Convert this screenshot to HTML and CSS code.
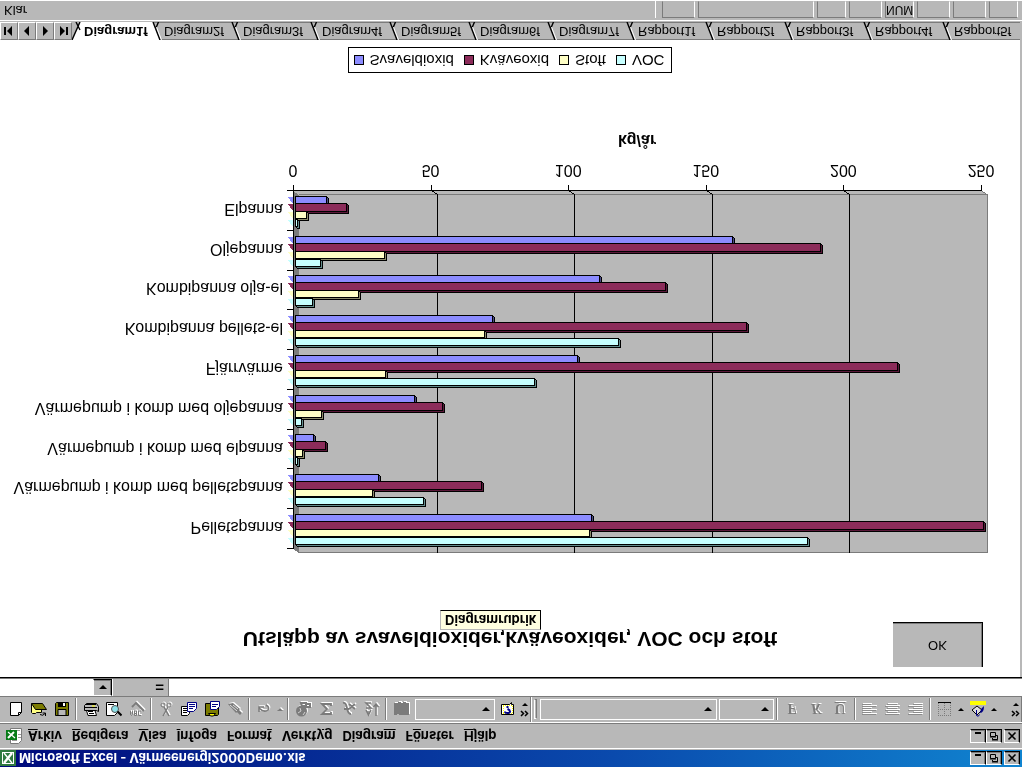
FILE: index.html
```html
<!DOCTYPE html>
<html lang="sv">
<head>
<meta charset="utf-8">
<title>Microsoft Excel - Värmeenergi2000Demo.xls</title>
<link rel="stylesheet" href="styles.css">
</head>
<body>
<svg class="symbols" aria-hidden="true">
  <symbol id="excel" viewBox="0 0 16 16"><path fill="#2f7a3f" d="M0 0h16v16H0z"/><path fill="#fff" d="M2 2h12v12H2z"/><path fill="#2f7a3f" d="M3 3h10v10H3z"/><path stroke="#fff" stroke-width="2.4" d="M4 3l8 10"/><path stroke="#fff" stroke-width="1.4" d="M12 3L4 13"/></symbol>
  <symbol id="book" viewBox="0 0 16 16"><path fill="#fff" stroke="#7b7b7b" d="M4.500 .5h8l3 3v12h-11z"/><path fill="none" stroke="#999" d="M6 3.500h5M12 6.500h3M12 9.500h3M6 13.500h8"/><path fill="#087b18" d="M0 4h11v10H0z"/><path stroke="#fff" stroke-width="2" d="M2 6l6 6"/><path stroke="#fff" stroke-width="1.200" d="M9 6l-7 6"/></symbol>
  <symbol id="min" viewBox="0 0 12 10"><path fill="#000" d="M3 7h6v2H3z"/></symbol>
  <symbol id="restore" viewBox="0 0 12 10"><path fill="none" stroke="#000" d="M4.500 3V1.500h5v4H8M4 1h6M2.500 4.500h5v4h-5zM2 4h6"/></symbol>
  <symbol id="close" viewBox="0 0 12 10"><path stroke="#000" stroke-width="1.600" d="M2.500 1.500l7 7M9.500 1.500l-7 7"/></symbol>
  <symbol id="more" viewBox="0 0 10 16"><path fill="none" stroke="#000" stroke-width="1.500" d="M1 2l2.500 2.500L1 7M5 2l2.500 2.500L5 7"/><path fill="#000" d="M2 12h6l-3 3z"/></symbol>
  <symbol id="slant" viewBox="0 0 12 18"><path fill="none" stroke="#000" stroke-width="1.400" d="M9 0L2 18M4.500 11l3 7"/><path stroke="#fff" d="M10.500 0L5.500 13"/></symbol>
</svg>

<div class="window">
  <header class="titlebar">
    <svg class="icon"><use href="#excel"/></svg>
    <h1 class="titlebar-text">Microsoft Excel - Värmeenergi2000Demo.xls</h1>
    <div class="window-buttons">
      <button class="winbtn" aria-label="Minimera"><svg><use href="#min"/></svg></button>
      <button class="winbtn" aria-label="Återställ"><svg><use href="#restore"/></svg></button>
      <button class="winbtn winbtn-close" aria-label="Stäng"><svg><use href="#close"/></svg></button>
    </div>
  </header>

  <nav class="menubar">
    <svg class="icon"><use href="#book"/></svg>
    <button class="menu"><u>A</u>rkiv</button>
    <button class="menu"><u>R</u>edigera</button>
    <button class="menu"><u>V</u>isa</button>
    <button class="menu"><u>I</u>nfoga</button>
    <button class="menu">Forma<u>t</u></button>
    <button class="menu">Verkt<u>y</u>g</button>
    <button class="menu">Diagra<u>m</u></button>
    <button class="menu">F<u>ö</u>nster</button>
    <button class="menu"><u>H</u>jälp</button>
    <div class="window-buttons">
      <button class="winbtn" aria-label="Minimera arbetsbok"><svg><use href="#min"/></svg></button>
      <button class="winbtn" aria-label="Återställ arbetsbok"><svg><use href="#restore"/></svg></button>
      <button class="winbtn winbtn-close" aria-label="Stäng arbetsbok"><svg><use href="#close"/></svg></button>
    </div>
  </nav>

  <div class="toolbars">
    <div class="toolbar">
      <button class="tool" aria-label="Nytt"><svg class="icon"><path fill="#fff" stroke="#000" d="M2.500 1.500h8l3 3v10h-11z"/><path fill="none" stroke="#000" d="M10.500 1.500v3h3"/></svg></button>
      <button class="tool" aria-label="Öppna"><svg class="icon"><path fill="#ffff84" stroke="#000" d="M.5 13.500v-9l1-1h3l1 1h5v3"/><path fill="#7b7b00" stroke="#000" d="M.5 13.500l4-6h11l-4 6z"/><path fill="none" stroke="#000" d="M9 2.500q3-2 5 1M14.500 1v3h-3"/></svg></button>
      <button class="tool" aria-label="Spara"><svg class="icon"><path fill="#7b7b00" stroke="#000" d="M1.500 1.500h13v13h-12l-1-1z"/><path fill="#b8b8b8" stroke="#000" d="M4 1.500h8v6H4z"/><path fill="#000" d="M4 10h8v4H4z"/><path fill="#fff" d="M9 11h2v3H9z"/></svg></button>
      <span class="sep"></span>
      <button class="tool" aria-label="Skriv ut"><svg class="icon"><path fill="#fff" stroke="#000" d="M5 1.500h8.500L12 6.500H3.500z"/><path fill="#b8b8b8" stroke="#000" d="M1.500 6.500h12l2-1v5l-2 3h-10l-2-2z"/><path stroke="#000" d="M6 3.500h5M5 5.500h5M1 9.500h13M3 12.500h10"/><path fill="#ffff00" d="M9 10.500h3v1H9z"/></svg></button>
      <button class="tool" aria-label="Förhandsgranska"><svg class="icon"><path fill="#fff" stroke="#000" d="M.5 1.500h8l3 3v10H.5z"/><circle cx="9" cy="8" r="3.500" fill="#8ce0e8" stroke="#555"/><path stroke="#000" stroke-width="2" d="M11.500 5.500l4-4"/><path stroke="#000" d="M2 12.500h6"/></svg></button>
      <button class="tool off" aria-label="Stavning" disabled><svg class="icon"><path fill="none" stroke="#7b7b7b" d="M1.500 6V2.500l1-1 1 1V6M1.500 4h2M5.500 1.500V6h2V1.500zM5.500 3.500h2M12 1.500H9.500V6H12"/><path stroke="#7b7b7b" stroke-width="2" fill="none" d="M3 10l4 4 8-8"/></svg></button>
      <span class="sep"></span>
      <button class="tool off" aria-label="Klipp ut" disabled><svg class="icon"><path stroke="#7b7b7b" stroke-width="1.500" fill="none" d="M5 1l5 9M11 1L6 10"/><circle cx="5" cy="12" r="2" fill="none" stroke="#7b7b7b"/><circle cx="11" cy="12" r="2" fill="none" stroke="#7b7b7b"/></svg></button>
      <button class="tool" aria-label="Kopiera"><svg class="icon"><path fill="#fff" stroke="#000" d="M.5 1.500h6l2 2v7h-8z"/><path fill="#fff" stroke="#000084" d="M6.500 5.500h6l3 3v6h-9z"/><path stroke="#000084" d="M8 8.500h4M8 10.500h6M8 12.500h6"/><path stroke="#000" d="M2 4.500h4M2 6.500h4M2 8.500h4"/></svg></button>
      <button class="tool" aria-label="Klistra in"><svg class="icon"><path fill="#7b7b00" stroke="#000" d="M1.500 1.500h12l1 1v11h-13z"/><path fill="#ffff00" stroke="#000" d="M4.500 3.500l2-2.500h3l2 2.500z"/><path fill="#fff" stroke="#000084" d="M6.500 7.500h6l3 3v5h-9z"/><path stroke="#000084" d="M8 10.500h4M8 12.500h6"/></svg></button>
      <button class="tool off" aria-label="Hämta format" disabled><svg class="icon"><path fill="#7b7b7b" d="M1 13l5 1 7-6-4-4z"/><path stroke="#7b7b7b" stroke-width="3" d="M10 7l4-4"/><path stroke="#ddd" d="M3 12l7-6M6 12l5-4"/></svg></button>
      <span class="sep"></span>
      <button class="tool off" aria-label="Ångra" disabled><svg class="icon"><path fill="none" stroke="#7b7b7b" stroke-width="1.500" d="M3 5v5h5M3 9q5-5 9-2 2 3-2 5"/></svg></button>
      <button class="drop off" aria-label="Ångra lista" disabled></button>
      <span class="sep"></span>
      <button class="tool off" aria-label="Infoga hyperlänk" disabled><svg class="icon"><circle cx="6.500" cy="6" r="5.500" fill="#7b7b7b"/><path stroke="#d0d0d0" fill="none" d="M3 4l3 2-1 3M8 2l2 3"/><path fill="none" stroke="#7b7b7b" stroke-width="2" d="M7 11h4v3H6zM10 10h5v3h-4"/></svg></button>
      <button class="tool off" aria-label="Autosumma" disabled><svg class="icon"><path fill="none" stroke="#7b7b7b" stroke-width="1.800" d="M13 5V3H4l5 5-5 5h9v-2"/></svg></button>
      <button class="tool off" aria-label="Klistra in funktion" disabled><svg class="icon"><path fill="none" stroke="#7b7b7b" stroke-width="1.800" d="M2 14q3 1 4-5t4-6M3 8h5M8 8l6 5M14 8l-6 5"/></svg></button>
      <button class="tool off" aria-label="Sortera stigande" disabled><svg class="icon"><path fill="none" stroke="#7b7b7b" stroke-width="1.500" d="M2 7l2.500-5L7 7M3 5h3M2 9h5l-5 5h5M12 1v12M9.500 10l2.500 3 2.500-3"/></svg></button>
      <span class="sep"></span>
      <button class="tool off" aria-label="Diagramguiden" disabled><svg class="icon"><path fill="#7b7b7b" d="M1 2h3v1h2V2h10v12h-3v1h-3v-1H8v1H5v-1H1z"/></svg></button>
      <span class="combo combo-zoom"><select aria-label="Zooma"><option></option></select></span>
      <button class="tool" aria-label="Hjälp"><svg class="icon"><path fill="#fff" stroke="#000" d="M1.500 2.500h12v10h-2v2l-2-2h-8z"/><path fill="none" stroke="#ffff00" stroke-dasharray="1 1" d="M3 3.500h9M3 11.500h9M3.500 4v7M12.500 4v7"/><path fill="none" stroke="#000084" stroke-width="2" d="M5 5.500q0-1.500 2.500-1.500T10 5.500 7.500 8M7.500 9v2"/></svg></button>
      <button class="more" aria-label="Fler knappar"><svg><use href="#more"/></svg></button>
    </div>
    <div class="toolbar toolbar-format">
      <span class="handle"></span>
      <span class="combo combo-font"><select aria-label="Teckensnitt"><option></option></select></span>
      <span class="combo combo-size"><select aria-label="Teckenstorlek"><option></option></select></span>
      <span class="sep"></span>
      <button class="tool tool-letter off" disabled>F</button>
      <button class="tool tool-letter off" disabled><i>K</i></button>
      <button class="tool tool-letter off" disabled><u>U</u></button>
      <span class="sep"></span>
      <button class="tool" aria-label="Vänsterjustera" disabled><svg class="icon"><path stroke="#8c8c8c" d="M0 2.500h14M0 4.500h9M0 6.500h14M0 8.500h9M0 10.500h14M0 12.500h9"/><path stroke="#fff" d="M1 3.500h14M1 5.500h9M1 7.500h14M1 9.500h9M1 11.500h14M1 13.500h9"/></svg></button>
      <button class="tool" aria-label="Centrera" disabled><svg class="icon"><path stroke="#8c8c8c" d="M0 2.500h14M2 4.500h10M0 6.500h14M2 8.500h10M0 10.500h14M2 12.500h10"/><path stroke="#fff" d="M1 3.500h14M3 5.500h10M1 7.500h14M3 9.500h10M1 11.500h14M3 13.500h10"/></svg></button>
      <button class="tool" aria-label="Högerjustera" disabled><svg class="icon"><path stroke="#8c8c8c" d="M0 2.500h14M5 4.500h9M0 6.500h14M5 8.500h9M0 10.500h14M5 12.500h9"/><path stroke="#fff" d="M1 3.500h14M6 5.500h9M1 7.500h14M6 9.500h9M1 11.500h14M6 13.500h9"/></svg></button>
      <span class="sep"></span>
      <button class="tool" aria-label="Kantlinjer"><svg class="icon"><path fill="none" stroke="#7b7b7b" stroke-dasharray="1 1" d="M1.500 1v13M7.500 1v13M13.500 1v13M1 1.500h13M1 7.500h13"/><path stroke="#000" d="M1 14.500h13"/></svg></button>
      <button class="drop" aria-label="Kantlinjer lista"></button>
      <button class="tool" aria-label="Fyllningsfärg"><svg class="icon"><path fill="#ddd" stroke="#000" d="M2 7l5-5 5 5-5 4z"/><path fill="none" stroke="#000084" d="M6.500 7V1.500q2-2 3 1"/><path fill="#000084" d="M10 4q4 0 4 7l-3-3z"/><path fill="#ffff00" d="M0 12h16v4H0z"/></svg></button>
      <button class="drop" aria-label="Fyllningsfärg lista"></button>
      <button class="more more-last" aria-label="Fler formatknappar"><svg><use href="#more"/></svg></button>
    </div>
  </div>

  <div class="formulabar">
    <input class="namebox" aria-label="Namnruta">
    <button class="namedrop" aria-label="Visa namn"></button>
    <button class="equals">=</button>
    <input class="formula" aria-label="Formelfält">
  </div>

  <main class="sheet">
    <div class="chart-head">
      <h2 class="chart-title">Utsläpp av svaveldioxider,kväveoxider, VOC och stoft</h2>
      <button class="ok">OK</button>
      <div class="tooltip" role="tooltip">Diagramrubrik</div>
    </div>
    <div class="chart">
      <ul class="categories">
        <li>Pelletspanna</li>
        <li>Värmepump i komb med pelletspanna</li>
        <li>Värmepump i komb med elpanna</li>
        <li>Värmepump i komb med oljepanna</li>
        <li>Fjärrvärme</li>
        <li>Kombipanna pellets-el</li>
        <li>Kombipanna olja-el</li>
        <li>Oljepanna</li>
        <li>Elpanna</li>
      </ul>
      <svg class="plot" id="plot" viewBox="0 0 737 376" preserveAspectRatio="none" role="img" aria-label="Utsläpp per uppvärmningssätt"></svg>
    </div>
    <ul class="scale">
      <li>0</li><li>50</li><li>100</li><li>150</li><li>200</li><li>250</li>
    </ul>
    <p class="unit">kg/år</p>
    <ul class="legend">
      <li><span class="key key-so2"></span>Svaveldioxid</li>
      <li><span class="key key-nox"></span>Kväveoxid</li>
      <li><span class="key key-dust"></span>Stoft</li>
      <li><span class="key key-voc"></span>VOC</li>
    </ul>
  </main>

  <nav class="tabs">
    <button class="tabnav" aria-label="Första bladet"><svg viewBox="0 0 12 12"><path d="M1 2h2v8H1zM9 1v10L4 6z"/></svg></button>
    <button class="tabnav" aria-label="Föregående blad"><svg viewBox="0 0 12 12"><path d="M8 1v10L3 6z"/></svg></button>
    <button class="tabnav" aria-label="Nästa blad"><svg viewBox="0 0 12 12"><path d="M4 1v10l5-5z"/></svg></button>
    <button class="tabnav" aria-label="Sista bladet"><svg viewBox="0 0 12 12"><path d="M9 2h2v8H9zM3 1v10l5-5z"/></svg></button>
    <button class="tab tab-active"><svg viewBox="0 0 12 18"><path fill="#b8b8b8" d="M0 0l8 18H0z"/><path stroke="#000" stroke-width="1.400" d="M0 0l8 18M8 10l-4 8"/></svg>Diagram1f</button>
    <button class="tab"><svg viewBox="0 0 12 18"><path fill="#fff" d="M0 0h9L2 18H0z"/><use href="#slant"/></svg>Diagram2f</button>
    <button class="tab"><svg><use href="#slant"/></svg>Diagram3f</button>
    <button class="tab"><svg><use href="#slant"/></svg>Diagram4f</button>
    <button class="tab"><svg><use href="#slant"/></svg>Diagram5f</button>
    <button class="tab"><svg><use href="#slant"/></svg>Diagram6f</button>
    <button class="tab"><svg><use href="#slant"/></svg>Diagram7f</button>
    <button class="tab"><svg><use href="#slant"/></svg>Rapport1f</button>
    <button class="tab"><svg><use href="#slant"/></svg>Rapport2f</button>
    <button class="tab"><svg><use href="#slant"/></svg>Rapport3f</button>
    <button class="tab"><svg><use href="#slant"/></svg>Rapport4f</button>
    <button class="tab"><svg><use href="#slant"/></svg>Rapport5f</button>
  </nav>

  <footer class="status">
    <span class="status-text">Klar</span>
    <span class="pane pane-s"></span>
    <span class="pane pane-l"></span>
    <span class="pane pane-xs"></span>
    <span class="pane pane-s"></span>
    <span class="pane pane-xs">NUM</span>
    <span class="pane pane-s"></span>
    <span class="pane pane-s"></span>
    <span class="pane pane-xs"></span>
  </footer>
</div>
<script src="chart.js"></script>
</body>
</html>
```

FILE: styles.css
```css
* { box-sizing: border-box; }

body {
  margin: 0;
  background: #fff;
  color: #000;
  font: 13px/16px "Liberation Sans", Arial, sans-serif;
}

button, input, select { font: inherit; color: inherit; margin: 0; padding: 0; border: 0; border-radius: 0; background: none; }
ul { list-style: none; margin: 0; padding: 0; }
h1, h2, p { margin: 0; }
.symbols { display: none; }
.icon { width: 16px; height: 16px; flex: none; }

/* The whole window is mirrored top to bottom */
.window {
  display: flex;
  flex-direction: column;
  min-height: 100vh;
  overflow: hidden;
  background: #b8b8b8;
  transform: scaleY(-1);
}

.titlebar {
  display: flex;
  align-items: center;
  gap: 3px;
  height: 17px;
  padding-right: 2px;
  background: linear-gradient(90deg, #000a7b, #0a4aad 60%, #1084d0);
  color: #fff;
}
.titlebar-text { font: bold 13px/16px Inter, "Liberation Sans", sans-serif; white-space: nowrap; }

.window-buttons { display: flex; margin-left: auto; }
.winbtn {
  display: flex;
  width: 16px;
  height: 14px;
  background: #b8b8b8;
  border: 1px solid;
  border-color: #fff #000 #000 #fff;
  box-shadow: inset -1px -1px #7b7b7b;
  padding: 1px;
}
.winbtn svg { width: 12px; height: 10px; }
.winbtn-close { margin-left: 2px; }

.menubar {
  display: flex;
  align-items: center;
  gap: 10px;
  height: 27px;
  padding: 0 2px 0 6px;
  border-top: 1px solid #b8b8b8;
  border-bottom: 1px solid #7b7b7b;
  box-shadow: inset 0 1px #fff;
}
.menubar .icon { margin-right: -4px; }
.menu { font: bold 13px/16px Inter, "Liberation Sans", sans-serif; white-space: nowrap; }

.toolbars { display: flex; height: 27px; border-top: 1px solid #fff; border-bottom: 1px solid #7b7b7b; }
.toolbar { display: flex; align-items: center; padding-left: 4px; border-right: 1px solid #7b7b7b; }
.toolbar-format { flex: 1; padding-left: 2px; border-left: 1px solid #fff; }
.tool { display: flex; align-items: center; justify-content: center; width: 23px; height: 22px; flex: none; }
.tool-letter { width: 24px; font: bold 15px/16px "Liberation Serif", serif; color: #7b7b7b; }
.off { filter: drop-shadow(1px 1px 0 #fff); }
.off svg { overflow: visible; }
.sep { flex: none; width: 2px; height: 22px; margin: 0 2px; border-left: 1px solid #7b7b7b; border-right: 1px solid #fff; }
.handle { flex: none; width: 3px; height: 20px; margin-right: 3px; border: 1px solid; border-color: #fff #7b7b7b #7b7b7b #fff; }
.drop { display: flex; justify-content: center; width: 10px; flex: none; }
.drop::after { content: ""; border: 3px solid transparent; border-top-color: #000; border-bottom: 0; }
.drop.off::after { border-top-color: #7b7b7b; }
.combo { position: relative; display: flex; height: 21px; border: 1px solid #fff; }
.combo select { appearance: none; width: 100%; }
.combo::after {
  content: "";
  position: absolute;
  right: 4px;
  top: 8px;
  border: 4px solid transparent;
  border-top-color: #000;
  border-bottom: 0;
  pointer-events: none;
}
.combo-zoom { width: 80px; margin: 0 1px 0 3px; }
.combo-font { flex: 1; margin-right: 2px; }
.combo-size { width: 55px; }
.more { width: 11px; flex: none; height: 18px; }
.more svg { width: 10px; height: 16px; }
.more-last { margin-left: 11px; }

.formulabar { display: flex; height: 19px; border-bottom: 1px solid #000; box-shadow: inset 0 -1px #7b7b7b; background: #fff; padding-bottom: 1px; }
.namebox { width: 93px; }
.namedrop { display: flex; align-items: center; justify-content: center; width: 19px; background: #b8b8b8; border: 1px solid; border-color: #fff #000 #000 #fff; box-shadow: inset -1px -1px #7b7b7b; }
.namedrop::after { content: ""; border: 4px solid transparent; border-top-color: #000; border-bottom: 0; }
.equals { width: 57px; padding-right: 4px; background: #b8b8b8; border-left: 1px solid #fff; border-right: 1px solid #7b7b7b; text-align: right; font-weight: bold; font-size: 15px; }
.formula { flex: 1; }

.sheet { flex: 1; display: flex; flex-direction: column; margin-right: 1px; border-right: 1px solid #b8b8b8; background: #fff; }
.chart-head { position: relative; display: grid; grid-template-columns: 1fr auto 1fr; padding: 10px 37px 0; }
.chart-title { grid-column: 2; font-size: 21px; line-height: 24px; padding-top: 16px; white-space: nowrap; }
.ok { justify-self: end; width: 90px; height: 45px; background: #b8b8b8; border: solid #000; border-width: 0 1px 1px 0; box-shadow: inset -1px -1px #7b7b7b; }
.tooltip {
  position: absolute;
  left: 440px;
  top: 47px;
  padding: 1px 4px;
  border: 1px solid;
  border-color: #b8b8b8 #000 #000 #b8b8b8;
  background: #ffffe0;
  font: bold 13px/16px Inter, "Liberation Sans", sans-serif;
}

.chart { display: flex; margin-top: 65px; font-size: 16px; }
.categories { flex: none; width: 283px; display: grid; grid-template-rows: repeat(9, 1fr); align-items: center; padding: 10px 0 8px; text-align: right; white-space: nowrap; }
.plot { flex: 1; min-width: 0; height: 376px; }
.scale { display: flex; justify-content: space-between; margin: 2px 39px 0 293px; font-size: 16px; line-height: 18px; }
.scale li { display: flex; justify-content: center; width: 0; }
.unit { margin: 12px 39px 0 293px; font-size: 16px; line-height: 18px; font-weight: bold; text-align: center; }
.legend { display: flex; align-self: center; gap: 10px; margin-top: 58px; padding: 3px 7px 3px 5px; border: 1px solid #000; font-size: 15px; line-height: 18px; }
.legend li { display: flex; align-items: center; gap: 6px; }
.key { width: 10px; height: 10px; border: 1px solid #000; }
.key-so2 { background: #8c8cff; }
.key-nox { background: #8c2c5a; }
.key-dust { background: #ffffc6; }
.key-voc { background: #c6ffff; }

.tabs { display: flex; height: 18px; overflow: hidden; box-shadow: inset 0 1px #7b7b7b, inset 0 -1px #7b7b7b; margin-right: 2px; }
.tabnav { flex: none; width: 18px; border: 1px solid; border-color: #7b7b7b #7b7b7b #fff #fff; display: flex; align-items: center; justify-content: center; }
.tabnav svg { width: 12px; height: 12px; }
.tab { flex: none; display: flex; align-items: center; gap: 1px; width: 79px; white-space: nowrap; }
.tab svg { width: 12px; height: 18px; flex: none; }
.tab-active { background: #fff; font-weight: bold; gap: 0; }

.status { display: flex; gap: 3px; height: 21px; margin-top: 1px; padding: 2px 4px 0; border-top: 1px solid #fff; border-bottom: 1px solid #fff; }
.status-text { flex: 1; border-right: 1px solid #fff; margin-right: 3px; }
.pane { flex: none; border: 1px solid; border-color: #7b7b7b #fff transparent #7b7b7b; font-size: 12px; line-height: 15px; }
.pane-xs { width: 29px; }
.pane-s { width: 33px; }
.pane-l { width: 116px; }
```

FILE: chart.js
```js
// Bar ends on the plot's own x scale, per category from top to bottom:
// VOC, dust, nitrogen oxide, sulphur dioxide.
const rows = [
  [524, 306, 700, 308],
  [140, 89, 198, 95],
  [14, 19, 42, 30],
  [18, 38, 159, 131],
  [251, 102, 614, 294],
  [335, 201, 463, 209],
  [29, 75, 382, 316],
  [37, 101, 537, 449],
  [14, 23, 63, 43]
];
const series = [
  { front: '#c6ffff', side: '#638c8c' },
  { front: '#ffffc6', side: '#8c8c6b' },
  { front: '#8c2c5a', side: '#5a1839' },
  { front: '#8c8cff', side: '#4a4a84' }
];
const barTops = [5, 13, 20, 28];
const barHeights = [7, 7, 8, 7];
const plotTop = 8;
const step = 358 / 9;
const axisX = 10;
const poly = (points, fill) => `<polygon points="${points}" fill="${fill}"/>`;
const line = (d, stroke) => `<path d="${d}" stroke="${stroke}" fill="none"/>`;

let out = poly('16,4 704,4 704,362 16,362', '#b8b8b8')
  + poly('10,366 16,362 704,362 698,366', '#b8b8b8')
  + poly('10,8 16,4 16,362 10,366', '#7b7b7b')
  + line('M16 4.500H704.500V362.500H16M698 366.500L704 362.500', '#7b7b7b');

for (let i = 0; i < 6; i++) {
  const x = Math.round(axisX + 137.6 * i) + 0.5;
  if (i > 0 && i < 5) out += line(`M${x} 366.500l6 -4V4`, '#000');
  out += line(`M${x} 366v6`, '#000');
}
out += line('M4 366.500H698M10.500 8V372', '#000');

rows.forEach((ends, r) => {
  const y0 = Math.round(plotTop + step * r);
  out += line(`M4 ${y0 + 0.5}h6`, '#000');
  for (let s = 3; s >= 0; s--) {
    const y = y0 + barTops[s] - 0.5;
    const h = barHeights[s];
    const e = ends[s] + 0.5;
    const c = series[s];
    out += `<path d="M12.500 ${y}l2 -2H${e + 2}V${y + h - 2}L${e} ${y + h}H12.500z" fill="${c.side}" stroke="#000"/>`
      + `<path d="M12.500 ${y}H${e}V${y + h}H12.500z" fill="${c.front}" stroke="#000"/>`
      + poly(`4,${y + h} 10,${y + h} 10,${y + h - 7}`, c.front);
  }
});
document.getElementById('plot').innerHTML = `<g shape-rendering="crispEdges">${out}</g>`;
```
